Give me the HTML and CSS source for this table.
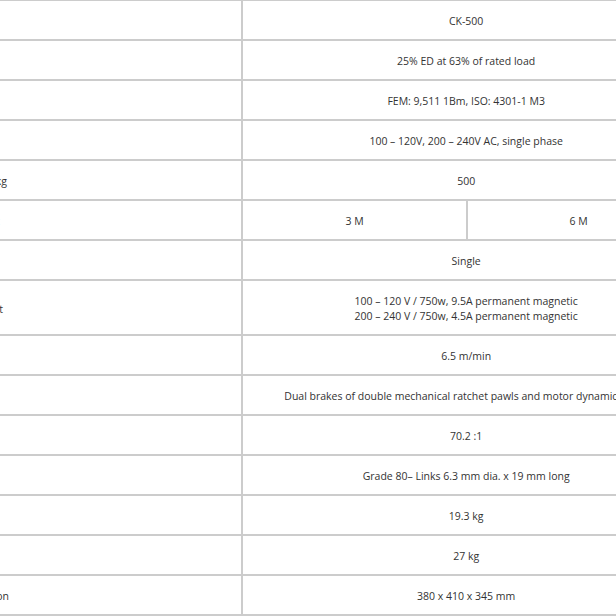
FILE: index.html
```html
<!DOCTYPE html>
<html lang="en">
<head>
<meta charset="utf-8">
<title>CK-500 Specifications</title>
<link rel="stylesheet" href="styles.css">
</head>
<body>
<table class="spec">
  <colgroup>
    <col class="c-label">
    <col class="c-a">
    <col class="c-b">
  </colgroup>
  <tbody>
    <tr><td class="label">Model</td><td colspan="2">CK-500</td></tr>
    <tr><td class="label">Duty Cycle</td><td colspan="2">25% ED at 63% of rated load</td></tr>
    <tr><td class="label">Duty Rating</td><td colspan="2">FEM: 9,511 1Bm, ISO: 4301-1 M3</td></tr>
    <tr><td class="label">Voltage</td><td colspan="2">100 – 120V, 200 – 240V AC, single phase</td></tr>
    <tr><td class="label">Lifting Capacity, kg</td><td colspan="2">500</td></tr>
    <tr><td class="label">Std Lifting Height</td><td>3 M</td><td>6 M</td></tr>
    <tr><td class="label">Chain Fall</td><td colspan="2">Single</td></tr>
    <tr><td class="label">Hoist Motor Input</td><td colspan="2">100 – 120 V / 750w, 9.5A permanent magnetic<br>200 – 240 V / 750w, 4.5A permanent magnetic</td></tr>
    <tr><td class="label">Lifting Speed</td><td colspan="2">6.5 m/min</td></tr>
    <tr><td class="label">Braking</td><td colspan="2">Dual brakes of double mechanical ratchet pawls and motor dynamic brake</td></tr>
    <tr><td class="label">Gear Ratio</td><td colspan="2">70.2 :1</td></tr>
    <tr><td class="label">Load Chain</td><td colspan="2">Grade 80– Links 6.3 mm dia. x 19 mm long</td></tr>
    <tr><td class="label">Net Weight</td><td colspan="2">19.3 kg</td></tr>
    <tr><td class="label">Gross Weight</td><td colspan="2">27 kg</td></tr>
    <tr><td class="label">Packing Dimension</td><td colspan="2">380 x 410 x 345 mm</td></tr>
    <tr><td class="label">Warranty</td><td colspan="2">1 year</td></tr>
  </tbody>
</table>
</body>
</html>
```
FILE: styles.css
```css
html, body {
  margin: 0;
  padding: 0;
  background: #ffffff;
  overflow: hidden;
}

.spec {
  border-collapse: collapse;
  table-layout: fixed;
  width: 789px;
  margin: -1px 0 0 -98px;
  font-family: "Open Sans", "Liberation Sans", sans-serif;
  font-size: 10.5px;
  line-height: 15px;
  color: #333333;
}

.c-label { width: 338px; }
.c-a { width: 224px; }
.c-b { width: 222px; }

.spec td {
  border: 2px solid #cccccc;
  padding: 13px 10px 10px;
  text-align: center;
  vertical-align: middle;
  white-space: nowrap;
}

.spec td.label {
  text-align: left;
  padding-left: 12px;
}
```
